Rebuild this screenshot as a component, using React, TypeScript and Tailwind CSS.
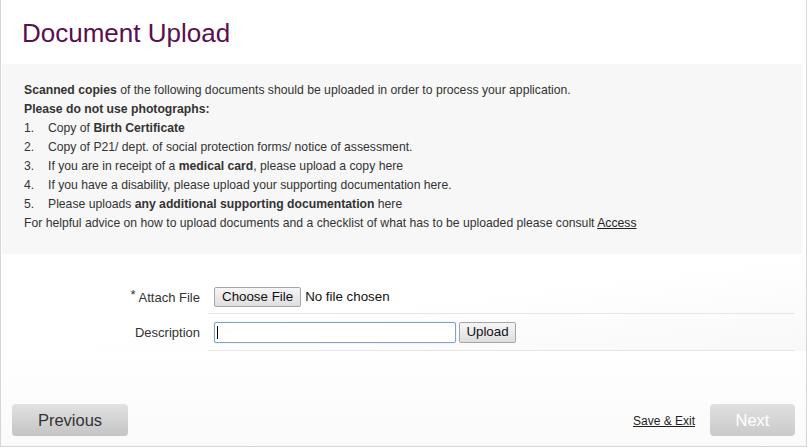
import React from "react";

export default function App() {
  const font = { fontFamily: '"Liberation Sans", Arial, sans-serif' };
  return (
    <div
      className="w-[807px] h-[447px] overflow-hidden bg-white text-[#333] flex flex-col border-l border-r border-b border-[#d6d6d6]"
      style={font}
    >
      <div className="h-[64px] flex items-center pl-[21px] pt-[2px]">
        <h1 className="text-[26px] leading-none text-[#5a0f50]">Document Upload</h1>
      </div>

      <div className="h-[190px] ml-[1px] mr-[4px] bg-[#f7f7f7] pl-[22px] pt-[17px] text-[12.2px] leading-[19px] text-[#333]">
        <div>
          <b>Scanned copies</b> of the following documents should be uploaded in order to process your application.
        </div>
        <div className="font-bold">Please do not use photographs:</div>
        <div className="flex">
          <span className="w-[24px]">1.</span>
          <span>
            Copy of <b>Birth Certificate</b>
          </span>
        </div>
        <div className="flex">
          <span className="w-[24px]">2.</span>
          <span>Copy of P21/ dept. of social protection forms/ notice of assessment.</span>
        </div>
        <div className="flex">
          <span className="w-[24px]">3.</span>
          <span>
            If you are in receipt of a <b>medical card</b>, please upload a copy here
          </span>
        </div>
        <div className="flex">
          <span className="w-[24px]">4.</span>
          <span>If you have a disability, please upload your supporting documentation here.</span>
        </div>
        <div className="flex">
          <span className="w-[24px]">5.</span>
          <span>
            Please uploads <b>any additional supporting documentation</b> here
          </span>
        </div>
        <div>
          For helpful advice on how to upload documents and a checklist of what has to be uploaded please consult{" "}
          <span className="underline text-[#222]">Access</span>
        </div>
      </div>

      <div className="pt-[27px] bg-gradient-to-br from-white via-white to-[#f8f8f8]">
        <div className="flex">
          <div className="w-[207px] pr-[8px] flex items-center justify-end h-[33px] text-[13px]">
            <span className="text-[13px] mr-[3px] -mt-[5px]">*</span>
            <span>Attach File</span>
          </div>
          <div className="w-[587px] h-[33px] border-b border-[#e6e6e6] flex items-center pl-[6px] pb-[1px]">
            <button className="h-[20px] px-[7px] border border-[#a5a5a5] rounded-[2px] bg-gradient-to-b from-[#f6f6f6] to-[#dedede] text-[13.33px] leading-none text-[#111]">
              Choose File
            </button>
            <span className="ml-[4px] text-[13.33px] text-[#111]">No file chosen</span>
          </div>
        </div>
        <div className="flex">
          <div className="w-[207px] pr-[8px] flex items-center justify-end h-[37px] text-[13px]">
            Description
          </div>
          <div className="w-[587px] h-[37px] border-b border-[#e6e6e6] flex items-center pl-[6px]">
            <div className="w-[242px] h-[21px] border border-[#7da2ce] rounded-[2px] bg-white flex items-center pl-[2px] shadow-[0_0_1px_#9cc0ea]">
              <span className="w-[1px] h-[13px] bg-black" />
            </div>
            <button className="ml-[3px] h-[21px] w-[57px] border border-[#a5a5a5] rounded-[2px] bg-gradient-to-b from-[#f6f6f6] to-[#dedede] text-[13.33px] leading-none text-[#111]">
              Upload
            </button>
          </div>
        </div>
      </div>

      <div className="flex-1 flex items-end justify-between pl-[11px] pr-[11px] pb-[10px] bg-gradient-to-b from-white to-[#fafafa]">
        <button className="w-[116px] h-[32px] rounded-[4px] bg-gradient-to-b from-[#e2e2e2] to-[#c4c4c4] text-[16.5px] text-[#333] leading-none">
          Previous
        </button>
        <div className="flex items-center">
          <span className="text-[12px] underline text-[#222] mr-[15px] mt-[2px]">Save &amp; Exit</span>
          <button className="w-[85px] h-[32px] rounded-[4px] bg-gradient-to-b from-[#e0e0e0] to-[#cacaca] text-[16.5px] text-white leading-none">
            Next
          </button>
        </div>
      </div>
    </div>
  );
}
